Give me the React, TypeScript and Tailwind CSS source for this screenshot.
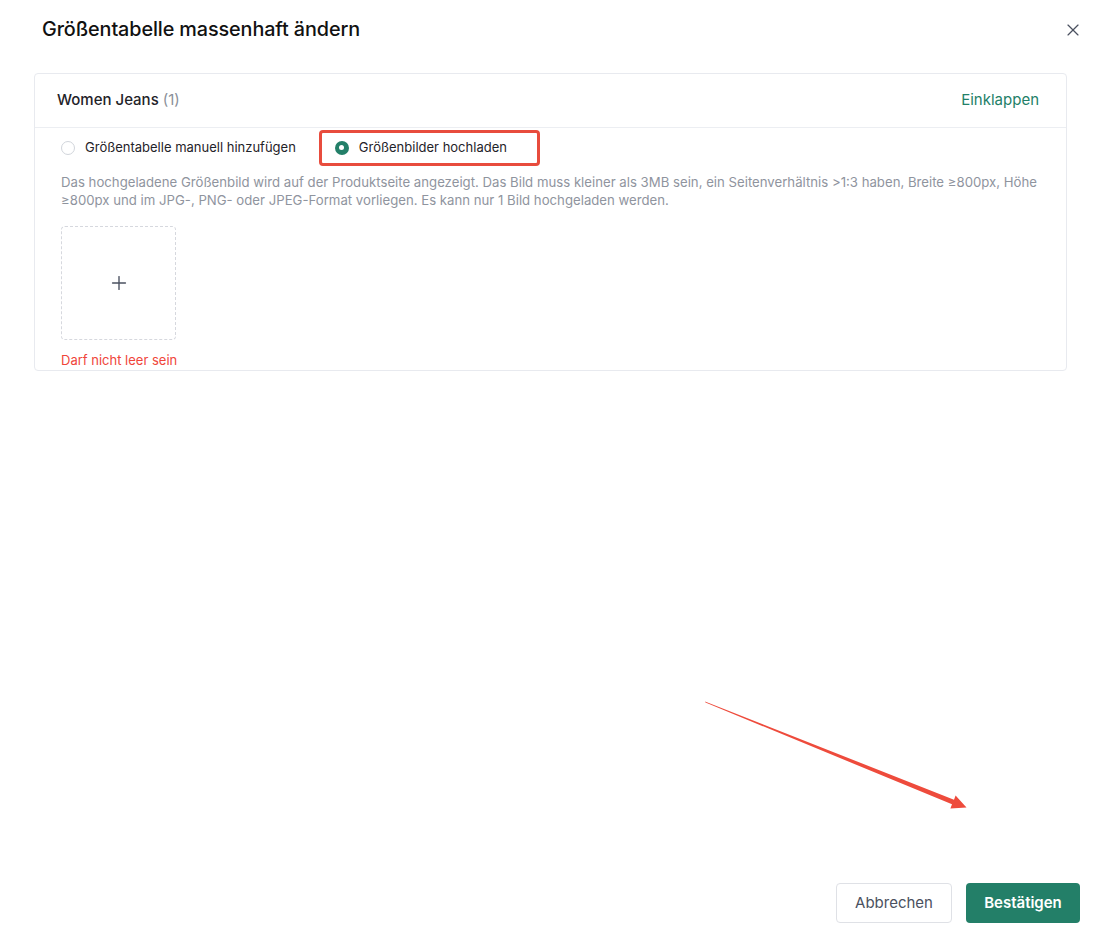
import { X, Plus } from "lucide-react";

// Bulk size chart edit dialog
const hint =
  "Das hochgeladene Größenbild wird auf der Produktseite angezeigt. Das Bild muss kleiner als 3MB sein, ein Seitenverhältnis >1:3 haben, Breite ≥800px, Höhe ≥800px und im JPG-, PNG- oder JPEG-Format vorliegen. Es kann nur 1 Bild hochgeladen werden.";

function Radio({ checked, label }: { checked?: boolean; label: string }) {
  return (
    <label className="flex items-center gap-[10px] cursor-pointer">
      {checked ? (
        <span className="w-[14px] h-[14px] rounded-full bg-[#237f68] flex items-center justify-center">
          <span className="w-[5px] h-[5px] rounded-full bg-white" />
        </span>
      ) : (
        <span className="w-[14px] h-[14px] rounded-full border border-[#d1d5db] bg-white" />
      )}
      <span className="text-[13px] text-[#1f2329]">{label}</span>
    </label>
  );
}

export default function App() {
  return (
    <div
      className="relative w-[1117px] h-[930px] bg-white flex flex-col"
      style={{ fontFamily: "Inter, 'Noto Sans', sans-serif" }}
    >
      {/* header */}
      <div className="flex items-center justify-between pl-[42px] pr-[34px] pt-[16px] h-[43px]">
        <h2 className="text-[19.8px] font-medium text-[#111] tracking-[-0.1px]">
          Größentabelle massenhaft ändern
        </h2>
        <X className="w-[20px] h-[20px] text-[#4b5160]" strokeWidth={1.4} />
      </div>

      {/* category card */}
      <div className="ml-[34px] mr-[50px] mt-[30px] border border-[#e8eaef] rounded-[4px]">
        <div className="h-[54px] flex items-center justify-between pl-[22px] pr-[27px] border-b border-[#eceef2]">
          <div className="text-[15px] font-medium text-[#1f2329]">
            Women Jeans <span className="font-normal text-[#8a8f99]">(1)</span>
          </div>
          <button className="text-[15px] text-[#237f68]">Einklappen</button>
        </div>

        <div className="pl-[26px] pr-[26px] pb-[1px]">
          <div className="flex items-center h-[37px] pt-[2px]">
            <Radio label="Größentabelle manuell hinzufügen" />
            <div className="ml-[23px] h-[36px] w-[221px] pl-[13px] flex items-center border-[3px] border-[#e84c3d] rounded-[4px]">
              <Radio checked label="Größenbilder hochladen" />
            </div>
          </div>

          <p className="mt-[8px] text-[13.2px] leading-[18px] text-[#8f949e]">{hint}</p>

          <div className="mt-[17px] w-[115px] h-[114px] border border-dashed border-[#d6d8de] rounded-[4px] flex items-center justify-center">
            <Plus className="w-[22px] h-[22px] text-[#4b5160]" strokeWidth={1.5} />
          </div>

          <div className="mt-[11px] text-[13px] leading-[18px] text-[#f0453a]">Darf nicht leer sein</div>
        </div>
      </div>

      <div className="flex-1" />

      {/* footer */}
      <div className="flex justify-end gap-[14px] pr-[37px] pb-[7px]">
        <button className="h-[40px] w-[116px] border border-[#dfe1e6] rounded-[4px] text-[15px] text-[#4b5160]">
          Abbrechen
        </button>
        <button className="h-[40px] w-[114px] rounded-[4px] bg-[#237f68] text-[15px] font-semibold text-white">
          Bestätigen
        </button>
      </div>

      {/* annotation arrow */}
      <svg className="absolute left-0 top-0 pointer-events-none" width="1117" height="930">
        <polygon
          points="705,701.5 705.5,702.5 952,804.3 950.4,808.5 966.5,807.5 955.6,795.5 954,799.7"
          fill="#ee4b3c"
        />
      </svg>
    </div>
  );
}
